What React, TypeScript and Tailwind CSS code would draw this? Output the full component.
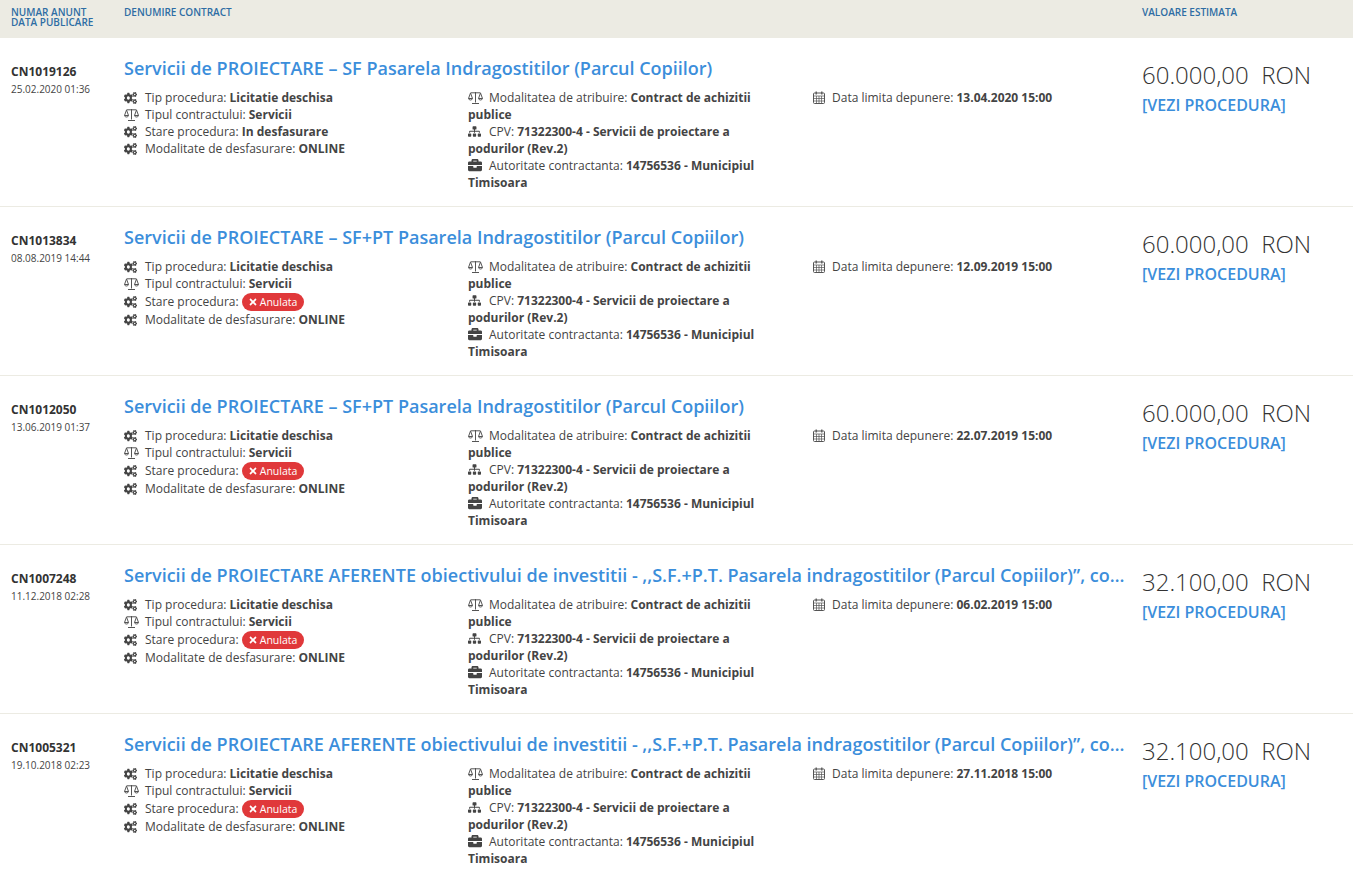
import { ReactNode } from "react";
import { FaBriefcase, FaCogs, FaSitemap, FaTimes } from "react-icons/fa";

type Row = {
  code: string;
  published: string;
  title: string;
  cancelled: boolean;
  deadline: string;
  value: string;
};

const rows: Row[] = [
  {
    code: "CN1019126",
    published: "25.02.2020 01:36",
    title: "Servicii de PROIECTARE – SF Pasarela Indragostitilor (Parcul Copiilor)",
    cancelled: false,
    deadline: "13.04.2020 15:00",
    value: "60.000,00",
  },
  {
    code: "CN1013834",
    published: "08.08.2019 14:44",
    title: "Servicii de PROIECTARE – SF+PT Pasarela Indragostitilor (Parcul Copiilor)",
    cancelled: true,
    deadline: "12.09.2019 15:00",
    value: "60.000,00",
  },
  {
    code: "CN1012050",
    published: "13.06.2019 01:37",
    title: "Servicii de PROIECTARE – SF+PT Pasarela Indragostitilor (Parcul Copiilor)",
    cancelled: true,
    deadline: "22.07.2019 15:00",
    value: "60.000,00",
  },
  {
    code: "CN1007248",
    published: "11.12.2018 02:28",
    title:
      "Servicii de PROIECTARE AFERENTE obiectivului de investitii - ,,S.F.+P.T. Pasarela indragostitilor (Parcul Copiilor)”, conform caietului de sarcini",
    cancelled: true,
    deadline: "06.02.2019 15:00",
    value: "32.100,00",
  },
  {
    code: "CN1005321",
    published: "19.10.2018 02:23",
    title:
      "Servicii de PROIECTARE AFERENTE obiectivului de investitii - ,,S.F.+P.T. Pasarela indragostitilor (Parcul Copiilor)”, conform caietului de sarcini",
    cancelled: true,
    deadline: "27.11.2018 15:00",
    value: "32.100,00",
  },
];

// outline balance scale, the solid one from the icon pack is too heavy here
function ScaleIcon() {
  return (
    <svg width="15" height="13" viewBox="0 0 15 13" fill="none" stroke="#555" strokeWidth="1">
      <path d="M7.5 1v10.500M4 12.500h7M2.500 1.800h10" />
      <path d="M2.500 2L.5 7.500h4zM12.500 2l-2 5.500h4z" />
      <path d="M.5 7.500c.3 2 3.700 2 4 0M10.500 7.500c.3 2 3.700 2 4 0" />
    </svg>
  );
}

function CalendarIcon() {
  return (
    <svg className="ml-px" width="12" height="13" viewBox="0 0 12 13" fill="none" stroke="#555" strokeWidth="1">
      <rect x="0.5" y="2" width="11" height="10.500" rx="1" />
      <path d="M.5 5h11M.5 7.500h11M.5 10h11M3.500 5v7.500M6 5v7.500M8.500 5v7.500" strokeWidth="0.7" />
      <path d="M3.200 .5v3M8.800 .5v3" strokeWidth="1.300" />
    </svg>
  );
}

function CogsIcon() {
  return <FaCogs preserveAspectRatio="none" className="h-[12px] w-[13px]" />;
}

function Line({ icon, gap = "mr-[7px]", children }: { icon: ReactNode; gap?: string; children: ReactNode }) {
  return (
    <div className="leading-[17px]">
      <span className={`${gap} inline-block w-[14px] align-[-2px] text-[#444]`}>{icon}</span>
      {children}
    </div>
  );
}

function Badge() {
  return (
    <span className="inline-flex h-[18px] items-center gap-[2px] rounded-full bg-[#e0383a] pl-[6px] pr-[7px] align-[-1px] text-[10.5px] leading-none text-white">
      <FaTimes size={10} />
      Anulata
    </span>
  );
}

function ContractRow({ row }: { row: Row }) {
  return (
    <div className="flex h-[169px] border-b border-[#ecebe3]">
      <div className="w-[124px] shrink-0 pl-[11px] pt-[26px]">
        <div className="text-[12px] font-bold leading-[16px] text-[#333]">{row.code}</div>
        <div className="mt-[3px] text-[10px] leading-[13px] text-[#444]">{row.published}</div>
      </div>

      <div className="w-[1018px] shrink-0 pt-[17px]">
        <div className="w-[1004px] truncate text-[18px] font-semibold leading-[26px] text-[#3b8edb]">
          {row.title}
        </div>
        <div className="mt-[8px] grid w-[1032px] grid-cols-[344px_344px_344px] text-[12px] text-[#444]">
          <div className="pr-[30px]">
            <Line icon={<CogsIcon />}>
              Tip procedura: <b>Licitatie deschisa</b>
            </Line>
            <Line icon={<ScaleIcon />}>
              Tipul contractului: <b>Servicii</b>
            </Line>
            <div className={row.cancelled ? "pt-px" : ""}>
              <Line icon={<CogsIcon />}>
                Stare procedura: {row.cancelled ? <Badge /> : <b>In desfasurare</b>}
              </Line>
            </div>
            <Line icon={<CogsIcon />}>
              Modalitate de desfasurare: <b>ONLINE</b>
            </Line>
          </div>
          <div className="pr-[30px]">
            <Line icon={<ScaleIcon />}>
              Modalitatea de atribuire: <b>Contract de achizitii publice</b>
            </Line>
            <Line icon={<FaSitemap size={13} />}>
              CPV: <b>71322300-4 - Servicii de proiectare a podurilor (Rev.2)</b>
            </Line>
            <Line icon={<FaBriefcase size={14} />}>
              Autoritate contractanta: <b>14756536 - Municipiul Timisoara</b>
            </Line>
          </div>
          <div className="pr-[30px]">
            <Line icon={<CalendarIcon />} gap="mr-[6px]">
              Data limita depunere: <b>{row.deadline}</b>
            </Line>
          </div>
        </div>
      </div>

      <div className="flex-1 pt-[20px]">
        <div className="whitespace-pre text-[24px] font-light leading-[34px] text-[#333]">{row.value}  RON</div>
        <div className="mt-px text-[16px] font-semibold leading-[24px] text-[#3b8edb]">[VEZI PROCEDURA]</div>
      </div>
    </div>
  );
}

export default function App() {
  return (
    <div className="h-[882px] overflow-hidden bg-white font-['Open_Sans',sans-serif]">
      <div className="flex h-[38px] bg-[#ecebe3] pt-[7px] text-[10px] font-semibold leading-[10px] text-[#2e6da4]">
        <div className="w-[124px] shrink-0 pl-[11px]">
          NUMAR ANUNT
          <br />
          DATA PUBLICARE
        </div>
        <div className="w-[1018px] shrink-0">DENUMIRE CONTRACT</div>
        <div className="flex-1">VALOARE ESTIMATA</div>
      </div>
      {rows.map((row) => (
        <ContractRow key={row.code} row={row} />
      ))}
    </div>
  );
}
